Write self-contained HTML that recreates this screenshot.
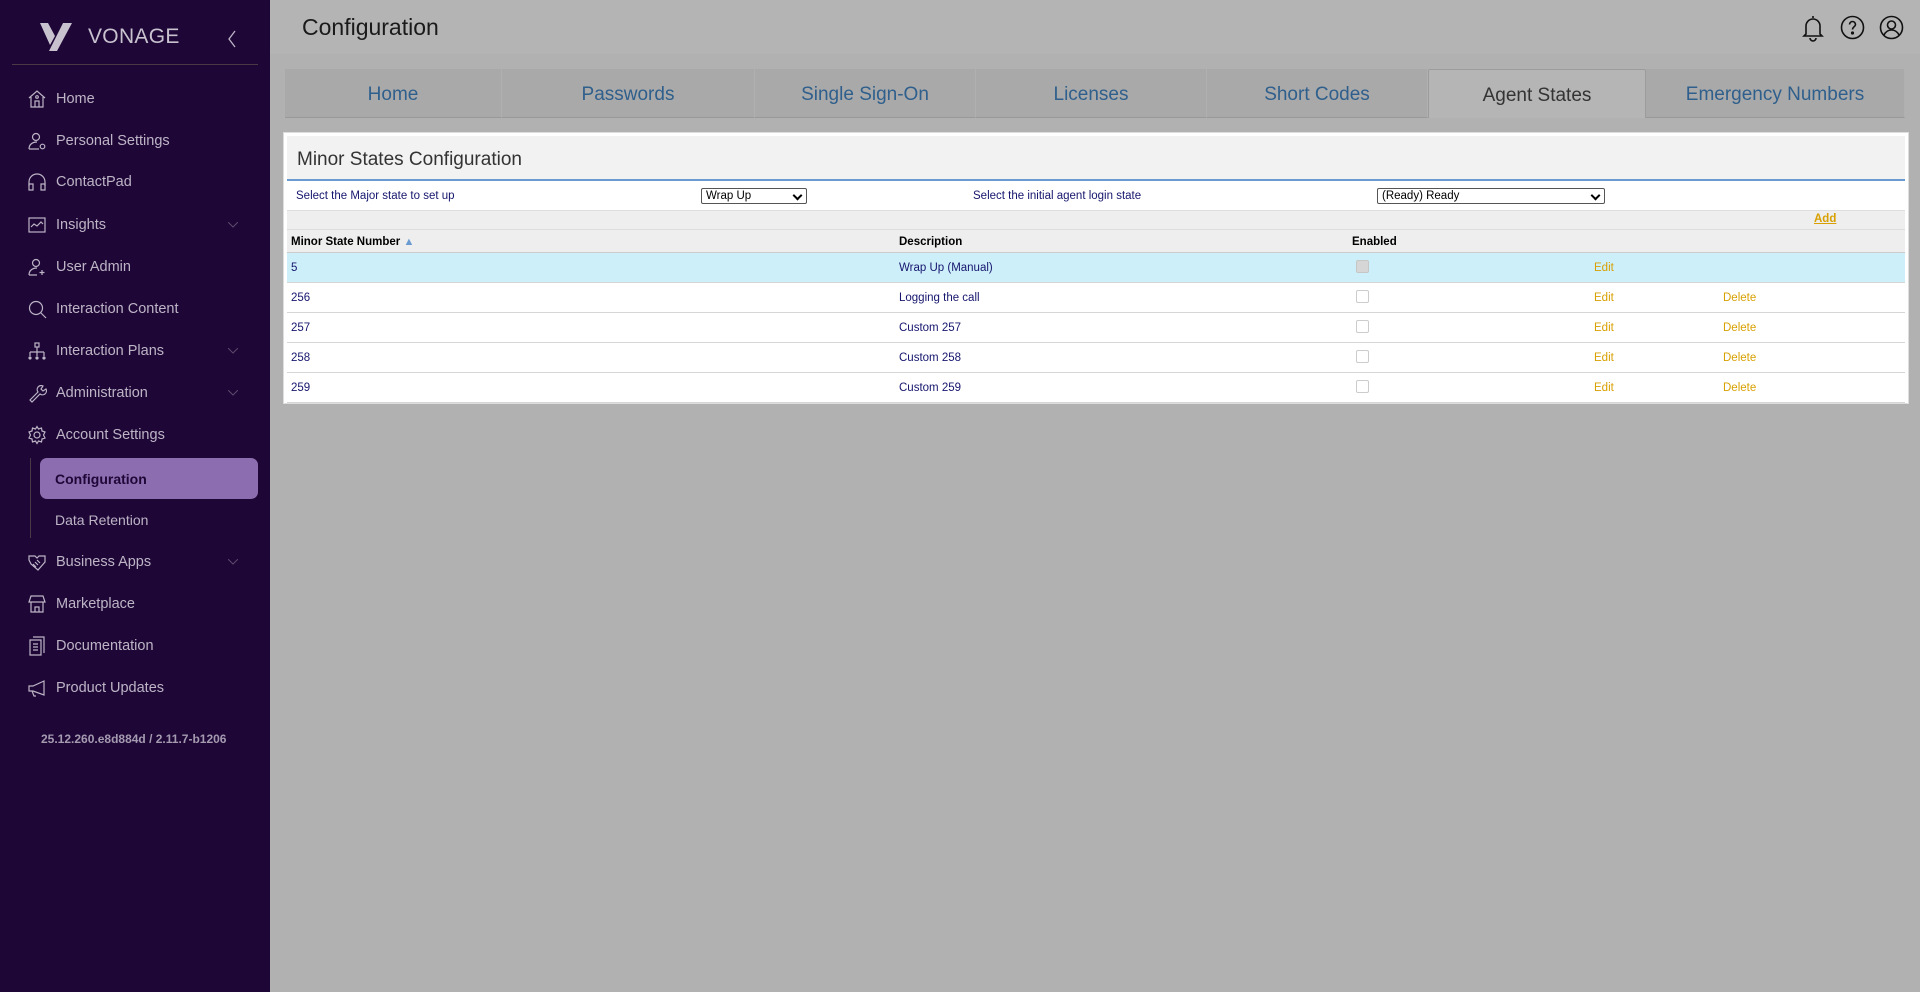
<!DOCTYPE html>
<html><head><meta charset="utf-8">
<style>
*{box-sizing:border-box;margin:0;padding:0}
body{width:1920px;height:992px;overflow:hidden;background:#b1b1b1;font-family:"Liberation Sans",sans-serif;position:relative}
#sb{position:absolute;left:0;top:0;width:270px;height:992px;background:#1e0637;color:#bdb5c6}
.logo{position:absolute;left:40px;top:22px;display:flex;align-items:center}
.logo span{font-size:21px;color:#c8c2cf;margin-left:14px;letter-spacing:.3px}
.div{position:absolute;left:12px;top:64px;width:246px;height:1px;background:#4a3a45}
.nav{position:absolute;left:0;width:270px;height:30px;display:flex;align-items:center;font-size:14.5px}
.nav svg{position:absolute;left:27px;width:20px;height:20px}
.nav .t{position:absolute;left:56px}
.nav .ch{position:absolute;left:228px;width:10px;height:6px}
.cfg{position:absolute;left:40px;top:458px;width:218px;height:41px;background:#8c6eb0;border-radius:7px;color:#1e0637;font-weight:bold;font-size:14px;padding:13px 0 0 15px}
.vl{position:absolute;left:30px;top:458px;width:1px;height:80px;background:#4a3a45}
#hdr{position:absolute;left:270px;top:0;width:1650px;height:54px;background:#b4b4b4}
#hdr h1{position:absolute;left:32px;top:14px;font-size:23px;font-weight:normal;color:#1a1a1a}
.tab{position:absolute;top:69px;height:49px;background:#a9a9a9;border-bottom:1px solid #999;color:#2f5f8c;font-size:19px;display:flex;align-items:center;justify-content:center;border-right:1px solid #b0b0b0;padding-top:4px}
.tab.a{background:#b5b5b5;border:1px solid #9c9c9c;border-bottom:none;color:#333;border-radius:2px 2px 0 0}
#panel{position:absolute;left:283px;top:132px;width:1626px;height:272px;background:#fff;border:1px solid #ddd}
.title{position:absolute;left:3px;top:3px;width:1618px;height:45px;background:#f2f2f2;border-bottom:2px solid #6a9bd0;font-size:19px;color:#333;padding:13px 0 0 10px}
.sm{font-size:11.5px;color:#16166e;position:absolute}
.sel{position:absolute;height:16px;border:1px solid #555;border-radius:2px;background:#fff;font-size:11.5px;color:#000;padding:1px 4px}
.sel:after{content:"";position:absolute;right:5px;top:3px;width:5px;height:5px;border-right:2px solid #000;border-bottom:2px solid #000;transform:rotate(45deg)}
.bar{position:absolute;left:3px;top:77px;width:1618px;height:19px;background:#eee;border-top:1px solid #ddd}
.hrow{position:absolute;left:3px;top:96px;width:1618px;height:24px;background:#eee;border-top:1px solid #ddd;border-bottom:1px solid #ccc}
.row{position:absolute;left:3px;width:1618px;height:30px;border-bottom:1px solid #d6d6d6;background:#fff}
.row.h{background:#cdeffa}
.c{position:absolute;top:9px;font-size:11.5px;color:#16166e}
.e{position:absolute;top:9px;font-size:11.5px;color:#d8a000}
.cb{position:absolute;top:7px;width:13px;height:13px;border:1px solid #ccc;border-radius:2px;background:#fff}
.b{font-weight:bold;color:#000}
</style></head><body>
<div id="sb">
 <div class="logo">
  <svg width="34" height="30" viewBox="0 0 34 30"><path d="M0 1h8l7 13-5 9z" fill="#c8c2cf"/><path d="M23 1h9L17 29h-8z" fill="#c8c2cf"/></svg>
  <span>VONAGE</span>
 </div>
 <svg style="position:absolute;left:227px;top:30px" width="10" height="18" viewBox="0 0 10 18"><path d="M8 1L2 9l6 8" fill="none" stroke="#bdb5c6" stroke-width="1.3"/></svg>
 <div class="div"></div>
 <div class="nav" style="top:84px"><svg viewBox="0 0 20 20" fill="none" stroke="#bdb5c6" stroke-width="1.2"><path d="M2 9l8-7 8 7M4 8v10h12V8M8 18v-6h4v6"/><circle cx="10" cy="8" r="1.3"/></svg><span class="t">Home</span></div>
 <div class="nav" style="top:126px"><svg viewBox="0 0 20 20" fill="none" stroke="#bdb5c6" stroke-width="1.2"><circle cx="9" cy="6" r="3.5"/><path d="M2 18c0-5 4-7 8-7M2 18h10"/><circle cx="15.5" cy="15.5" r="2.3"/></svg><span class="t">Personal Settings</span></div>
 <div class="nav" style="top:167px"><svg viewBox="0 0 20 20" fill="none" stroke="#bdb5c6" stroke-width="1.2"><path d="M2 14v-4a8 8 0 0116 0v4"/><path d="M2 12h4v6H2zM14 12h4v6h-4z"/></svg><span class="t">ContactPad</span></div>
 <div class="nav" style="top:210px"><svg viewBox="0 0 20 20" fill="none" stroke="#bdb5c6" stroke-width="1.2"><rect x="2" y="3" width="16" height="14"/><path d="M4 12l3-3 3 2 4-4 2 2"/></svg><span class="t">Insights</span><svg class="ch" viewBox="0 0 10 6"><path d="M0 0l5 5 5-5" fill="none" stroke="#5b4a6a"/></svg></div>
 <div class="nav" style="top:252px"><svg viewBox="0 0 20 20" fill="none" stroke="#bdb5c6" stroke-width="1.2"><circle cx="9" cy="6" r="3.5"/><path d="M2 18c0-5 4-7 8-7M2 18h8M15 13v5M12.5 15.5h5"/></svg><span class="t">User Admin</span></div>
 <div class="nav" style="top:294px"><svg viewBox="0 0 20 20" fill="none" stroke="#bdb5c6" stroke-width="1.2"><circle cx="9" cy="9" r="6.5"/><path d="M14 14l5 5"/></svg><span class="t">Interaction Content</span></div>
 <div class="nav" style="top:336px"><svg viewBox="0 0 20 20" fill="none" stroke="#bdb5c6" stroke-width="1.2"><rect x="8" y="2" width="4" height="4"/><path d="M10 6v5M3 11h14M3 11v4M10 11v4M17 11v4"/><circle cx="3" cy="17" r="1" fill="#bdb5c6"/><circle cx="10" cy="17" r="1" fill="#bdb5c6"/><circle cx="17" cy="17" r="1" fill="#bdb5c6"/></svg><span class="t">Interaction Plans</span><svg class="ch" viewBox="0 0 10 6"><path d="M0 0l5 5 5-5" fill="none" stroke="#5b4a6a"/></svg></div>
 <div class="nav" style="top:378px"><svg viewBox="0 0 20 20" fill="none" stroke="#bdb5c6" stroke-width="1.2"><path d="M3 17l8-8a4 4 0 015-6l-2 3 2 2 3-2a4 4 0 01-6 5l-8 8z"/></svg><span class="t">Administration</span><svg class="ch" viewBox="0 0 10 6"><path d="M0 0l5 5 5-5" fill="none" stroke="#5b4a6a"/></svg></div>
 <div class="nav" style="top:420px"><svg viewBox="0 0 20 20" fill="none" stroke="#bdb5c6" stroke-width="1.2"><circle cx="10" cy="10" r="3"/><path d="M10 1.5l1.5 2.5 3-1 .5 3 3 1-1.5 3 1.5 3-3 1-.5 3-3-1-1.5 2.5-1.5-2.5-3 1-.5-3-3-1 1.5-3-1.5-3 3-1 .5-3 3 1z"/></svg><span class="t">Account Settings</span></div>
 <div class="vl"></div>
 <div class="cfg">Configuration</div>
 <div class="nav" style="top:505px"><span class="t" style="left:55px;font-size:14px">Data Retention</span></div>
 <div class="nav" style="top:547px"><svg viewBox="0 0 20 20" fill="none" stroke="#bdb5c6" stroke-width="1.2"><path d="M2 4h6l2 2 2-2h6v6l-7 8-7-6-2-4z"/><path d="M6 12l3 3M8 10l3 3M10 8l3 3"/></svg><span class="t">Business Apps</span><svg class="ch" viewBox="0 0 10 6"><path d="M0 0l5 5 5-5" fill="none" stroke="#5b4a6a"/></svg></div>
 <div class="nav" style="top:589px"><svg viewBox="0 0 20 20" fill="none" stroke="#bdb5c6" stroke-width="1.2"><path d="M4 2h12l2 6H2zM2 8h16M4 8v10h12V8M8 18v-5h4v5"/></svg><span class="t">Marketplace</span></div>
 <div class="nav" style="top:631px"><svg viewBox="0 0 20 20" fill="none" stroke="#bdb5c6" stroke-width="1.2"><path d="M6 1h11v16M3 4h11v15H3zM6 8h5M6 11h5M6 14h5"/></svg><span class="t">Documentation</span></div>
 <div class="nav" style="top:673px"><svg viewBox="0 0 20 20" fill="none" stroke="#bdb5c6" stroke-width="1.2"><path d="M2 8h4l11-5v14L6 13H2zM5 13l2 5h2"/></svg><span class="t">Product Updates</span></div>
 <div style="position:absolute;left:41px;top:732px;font-size:12px;font-weight:bold;color:#a49bb0">25.12.260.e8d884d / 2.11.7-b1206</div>
</div>
<div id="hdr"><h1>Configuration</h1>
 <svg style="position:absolute;left:1530px;top:14px" width="26" height="28" viewBox="0 0 26 28" fill="none" stroke="#111" stroke-width="1.6"><path d="M13 2v2M6 20V12a7 7 0 0114 0v8l2 2H4z M10 24a3 3 0 006 0"/></svg>
 <svg style="position:absolute;left:1570px;top:15px" width="25" height="25" viewBox="0 0 25 25" fill="none" stroke="#111" stroke-width="1.6"><circle cx="12.5" cy="12.5" r="11"/><path d="M9.5 9.5a3 3 0 016 0c0 2-3 2.5-3 5"/><circle cx="12.5" cy="18" r=".8" fill="#111"/></svg>
 <svg style="position:absolute;left:1609px;top:15px" width="25" height="25" viewBox="0 0 25 25" fill="none" stroke="#111" stroke-width="1.6"><circle cx="12.5" cy="12.5" r="11"/><circle cx="12.5" cy="10" r="4"/><path d="M5 20c2-4 5-5 7.5-5s5.5 1 7.5 5"/></svg>
</div>
<div class="tab" style="left:285px;width:217px">Home</div>
<div class="tab" style="left:502px;width:253px">Passwords</div>
<div class="tab" style="left:755px;width:221px">Single Sign-On</div>
<div class="tab" style="left:976px;width:231px">Licenses</div>
<div class="tab" style="left:1207px;width:221px">Short Codes</div>
<div class="tab a" style="left:1428px;width:218px">Agent States</div>
<div class="tab" style="left:1646px;width:259px">Emergency Numbers</div>
<div id="panel">
 <div class="title">Minor States Configuration</div>
 <div class="sm" style="left:12px;top:57px">Select the Major state to set up</div>
 <div class="sel" style="left:417px;top:55px;width:106px">Wrap Up</div>
 <div class="sm" style="left:689px;top:57px">Select the initial agent login state</div>
 <div class="sel" style="left:1093px;top:55px;width:228px">(Ready) Ready</div>
 <div class="bar"><span style="position:absolute;left:1527px;top:2px;font-size:11.5px;font-weight:bold;color:#d8a000;text-decoration:underline">Add</span></div>
 <div class="hrow">
  <span class="c b" style="left:4px;top:6px">Minor State Number <span style="color:#6a9bd0;font-size:11px">▲</span></span>
  <span class="c b" style="left:612px;top:6px">Description</span>
  <span class="c b" style="left:1065px;top:6px">Enabled</span>
 </div>
 <div class="row h" style="top:120px"><span class="c" style="left:4px">5</span><span class="c" style="left:612px">Wrap Up (Manual)</span><span class="cb" style="left:1069px;background:#d6d6d6;border-color:#c6c6c6"></span><span class="e" style="left:1307px">Edit</span></div>
 <div class="row" style="top:150px"><span class="c" style="left:4px">256</span><span class="c" style="left:612px">Logging the call</span><span class="cb" style="left:1069px"></span><span class="e" style="left:1307px">Edit</span><span class="e" style="left:1436px">Delete</span></div>
 <div class="row" style="top:180px"><span class="c" style="left:4px">257</span><span class="c" style="left:612px">Custom 257</span><span class="cb" style="left:1069px"></span><span class="e" style="left:1307px">Edit</span><span class="e" style="left:1436px">Delete</span></div>
 <div class="row" style="top:210px"><span class="c" style="left:4px">258</span><span class="c" style="left:612px">Custom 258</span><span class="cb" style="left:1069px"></span><span class="e" style="left:1307px">Edit</span><span class="e" style="left:1436px">Delete</span></div>
 <div class="row" style="top:240px"><span class="c" style="left:4px">259</span><span class="c" style="left:612px">Custom 259</span><span class="cb" style="left:1069px"></span><span class="e" style="left:1307px">Edit</span><span class="e" style="left:1436px">Delete</span></div>
</div>
</body></html>
